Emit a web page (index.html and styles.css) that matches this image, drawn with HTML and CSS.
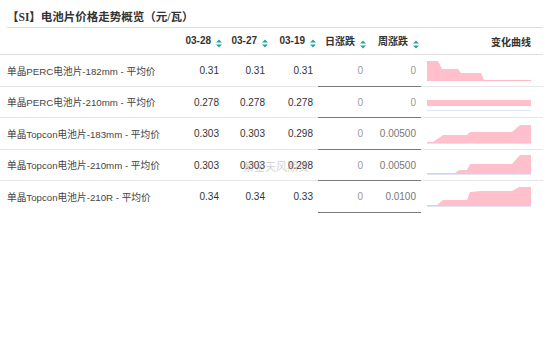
FILE: index.html
```html
<!DOCTYPE html>
<html lang="zh">
<head>
<meta charset="utf-8">
<title>电池片价格走势概览</title>
<link rel="stylesheet" href="styles.css">
</head>
<body>
<div class="panel">
  <div class="title">【SI】电池片价格走势概览（元/瓦）</div>
  <table class="grid">
    <colgroup>
      <col class="w-name"><col class="w-d1"><col class="w-d2"><col class="w-d3"><col class="w-day"><col class="w-week"><col class="w-spark">
    </colgroup>
    <thead>
      <tr>
        <th></th>
        <th>03-28<svg class="sort" width="6" height="9" viewBox="0 0 6 9"><path d="M0 3.6L3 0.6L6 3.6Z M0 5.4L3 8.4L6 5.4Z"/></svg></th>
        <th>03-27<svg class="sort" width="6" height="9" viewBox="0 0 6 9"><path d="M0 3.6L3 0.6L6 3.6Z M0 5.4L3 8.4L6 5.4Z"/></svg></th>
        <th>03-19<svg class="sort" width="6" height="9" viewBox="0 0 6 9"><path d="M0 3.6L3 0.6L6 3.6Z M0 5.4L3 8.4L6 5.4Z"/></svg></th>
        <th>日涨跌<svg class="sort" width="6" height="9" viewBox="0 0 6 9"><path d="M0 3.6L3 0.6L6 3.6Z M0 5.4L3 8.4L6 5.4Z"/></svg></th>
        <th>周涨跌<svg class="sort" width="6" height="9" viewBox="0 0 6 9"><path d="M0 3.6L3 0.6L6 3.6Z M0 5.4L3 8.4L6 5.4Z"/></svg></th>
        <th class="spark-head">变化曲线</th>
      </tr>
    </thead>
    <tbody>
      <tr>
        <td class="name">单晶PERC电池片-182mm - 平均价</td>
        <td>0.31</td><td>0.31</td><td>0.31</td>
        <td class="chg zero">0</td><td class="chg zero">0</td>
        <td class="spark"><svg width="104" height="26" viewBox="0 0 104 26"><path class="area" d="M0 23L0 3L11 3L15 11L31 11L34 15L54 15L57 22L104 22L104 23Z"/><line class="dash" x1="57" y1="22.5" x2="104" y2="22.5"/></svg></td>
      </tr>
      <tr class="short">
        <td class="name">单晶PERC电池片-210mm - 平均价</td>
        <td>0.278</td><td>0.278</td><td>0.278</td>
        <td class="chg zero">0</td><td class="chg zero">0</td>
        <td class="spark"><svg width="104" height="26" viewBox="0 0 104 26"><rect class="area" x="0" y="11" width="104" height="6"/><line class="axis" x1="0" y1="21.5" x2="104" y2="21.5"/></svg></td>
      </tr>
      <tr>
        <td class="name">单晶Topcon电池片-183mm - 平均价</td>
        <td>0.303</td><td>0.303</td><td>0.298</td>
        <td class="chg zero">0</td><td class="chg">0.00500</td>
        <td class="spark"><svg width="104" height="26" viewBox="0 0 104 26"><path class="area" d="M0 22L0 21L6 21L16 14L40 14L43 11L85 11L93 4L104 4L104 22Z"/><line class="axis" x1="0" y1="22.5" x2="104" y2="22.5"/></svg></td>
      </tr>
      <tr class="short">
        <td class="name">单晶Topcon电池片-210mm - 平均价</td>
        <td>0.303</td><td>0.303</td><td>0.298</td>
        <td class="chg zero">0</td><td class="chg">0.00500</td>
        <td class="spark"><svg width="104" height="26" viewBox="0 0 104 26"><path class="area" d="M0 22L0 21L28 21L32 18L40 18L43 12L85 12L93 3L104 3L104 22Z"/><line class="axis" x1="0" y1="22.5" x2="104" y2="22.5"/></svg></td>
      </tr>
      <tr class="last">
        <td class="name">单晶Topcon电池片-210R - 平均价</td>
        <td>0.34</td><td>0.34</td><td>0.33</td>
        <td class="chg zero">0</td><td class="chg">0.0100</td>
        <td class="spark"><svg width="104" height="26" viewBox="0 0 104 26"><path class="area" d="M0 22L0 21L10 21L16 16L40 16L43 8L55 7L85 7L92 3L104 3L104 22Z"/><line class="axis" x1="0" y1="22.5" x2="104" y2="22.5"/></svg></td>
      </tr>
    </tbody>
  </table>
  <div class="watermark">紫金天风期货</div>
</div>
</body>
</html>
```

FILE: styles.css
```css
html, body {
  margin: 0;
  padding: 0;
  background: #ffffff;
}

.panel {
  position: relative;
  width: 550px;
  font-family: "Liberation Sans", "Noto Sans CJK SC", sans-serif;
  color: #333333;
}

.title {
  margin-left: 7px;
  width: 536px;
  box-sizing: border-box;
  height: 28px;
  padding-top: 8px;
  line-height: 19px;
  font-family: "Liberation Serif", "Noto Sans CJK SC", serif;
  font-size: 11.5px;
  font-weight: bold;
  color: #333333;
  border-bottom: 1px solid #dddddd;
}

.grid {
  width: 543px;
  table-layout: fixed;
  border-collapse: collapse;
  border-spacing: 0;
  font-size: 10px;
}

.w-name { width: 178px; }
.w-d1 { width: 46px; }
.w-d2 { width: 46px; }
.w-d3 { width: 48px; }
.w-day { width: 50px; }
.w-week { width: 53px; }
.w-spark { width: 122px; }

.grid th {
  height: 26px;
  padding: 0 2px 0 0;
  text-align: right;
  font-weight: bold;
  color: #333333;
  white-space: nowrap;
  border-bottom: 1px solid #dedede;
}

.grid th.spark-head {
  padding-right: 12px;
}

.sort {
  display: inline-block;
  margin-left: 5px;
  vertical-align: -4px;
  fill: #26a69a;
}

.grid td {
  height: 31px;
  padding: 0 5px 0 0;
  text-align: right;
  white-space: nowrap;
  color: #333333;
  border-bottom: 1px solid #e6e6e6;
}

.grid tr.short td {
  height: 30px;
}

.grid td.name {
  text-align: left;
  padding-left: 7px;
  font-size: 9.7px;
  color: #444444;
}

.grid td.chg {
  color: #777777;
  border-bottom-color: #7a7a7a;
}

.grid td.zero {
  color: #999999;
}

.grid tr.last td {
  border-bottom-color: transparent;
}

.grid tr.last td.chg {
  border-bottom-color: #7a7a7a;
}

.grid td.spark {
  padding: 0 0 0 6px;
  text-align: left;
  line-height: 0;
}

.spark svg {
  display: block;
}

.area {
  fill: #ffc0cb;
}

.dash {
  stroke: #ffb6c1;
  stroke-width: 1;
  stroke-dasharray: 2 1;
}

.axis {
  stroke: #dfe6f3;
  stroke-width: 1;
}

.watermark {
  position: absolute;
  left: 243px;
  top: 160px;
  font-size: 11px;
  line-height: 14px;
  color: rgba(150, 150, 150, 0.45);
  pointer-events: none;
}
```
